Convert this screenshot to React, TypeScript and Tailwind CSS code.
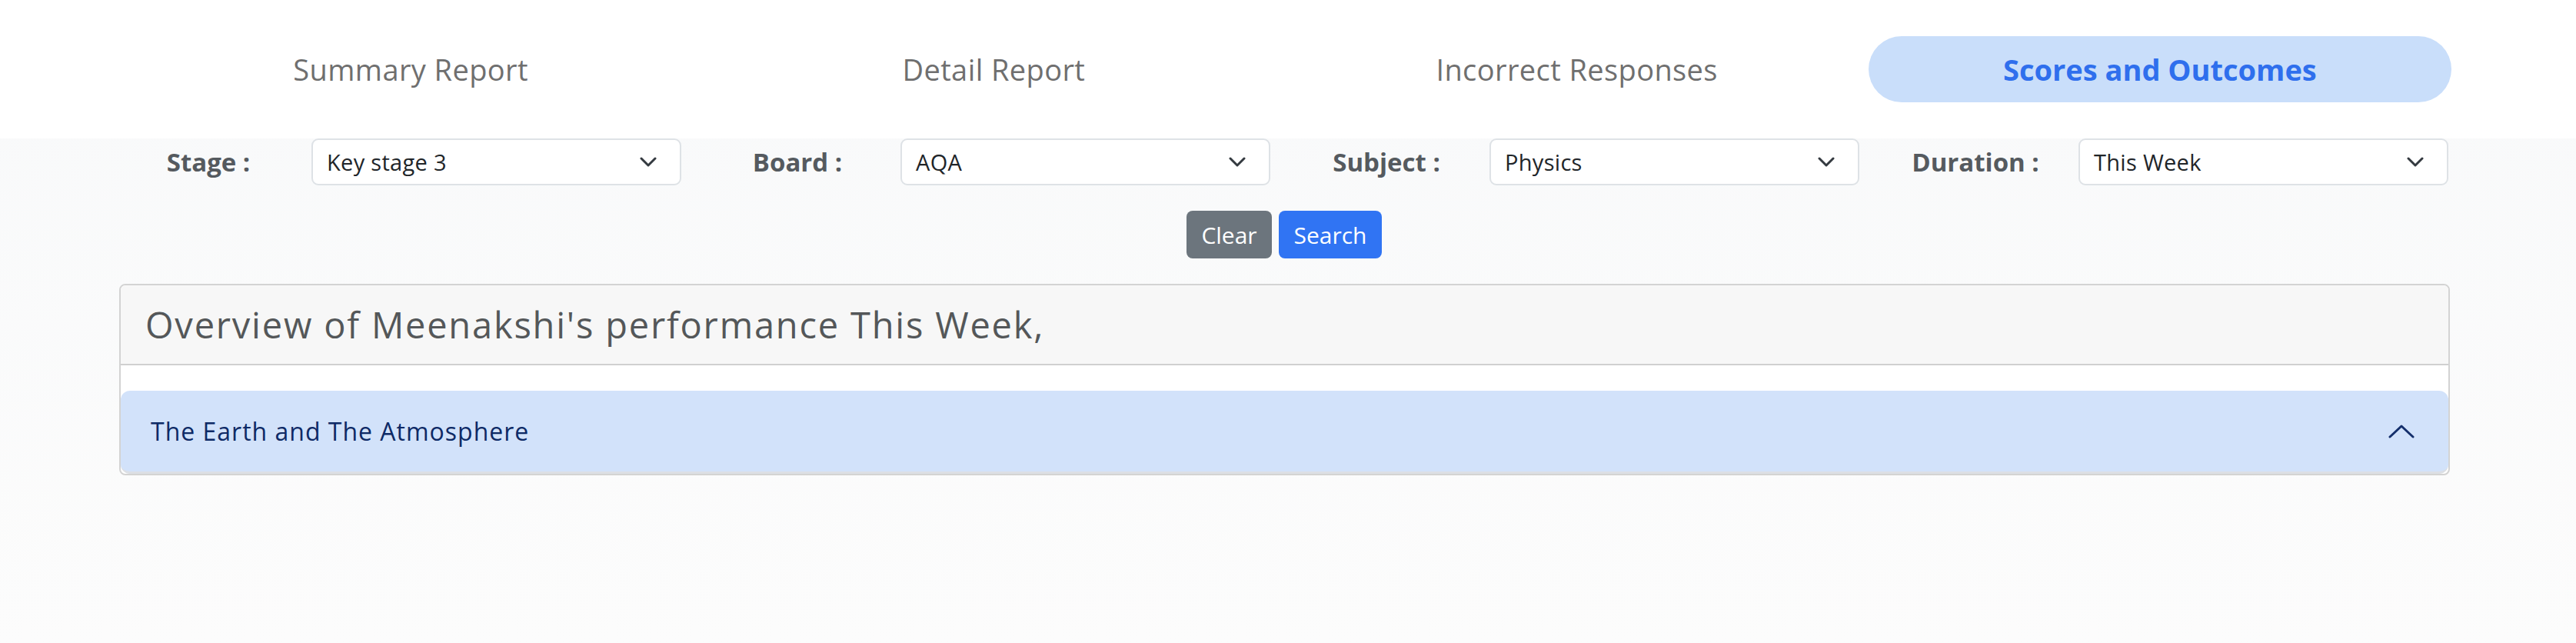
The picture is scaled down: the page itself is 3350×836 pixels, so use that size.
const tabs = ["Summary Report", "Detail Report", "Incorrect Responses", "Scores and Outcomes"]

const filters = [
  { label: "Stage :", value: "Key stage 3" },
  { label: "Board :", value: "AQA" },
  { label: "Subject :", value: "Physics" },
  { label: "Duration :", value: "This Week" },
]

function SelectBox({ value }: { value: string }) {
  return (
    <div className="ml-[6px] flex h-[61px] w-[481px] items-center justify-between rounded-[9px] border-2 border-[#dee2e6] bg-white pl-[18px] pr-[30px]">
      <span className="text-[29px] tracking-[0.3px] text-[#212529]">{value}</span>
      <svg width="22" height="13" viewBox="0 0 22 13" fill="none">
        <path d="M2 2 L11 11 L20 2" stroke="#343a40" strokeWidth="3" strokeLinecap="round" strokeLinejoin="round" />
      </svg>
    </div>
  )
}

export default function App() {
  const active = 3

  return (
    <div
      className="min-h-[836px] w-full bg-gradient-to-b from-[#f8f9fa] to-[#fcfcfc]"
      style={{ fontFamily: '"Open Sans", "Noto Sans", sans-serif' }}
    >
      {/* Tabs */}
      <nav className="flex h-[180px] items-center bg-white">
        <div className="ml-[155px] grid w-[3033px] grid-cols-4">
          {tabs.map((t, i) => (
            <div
              key={t}
              className={
                i === active
                  ? "flex h-[86px] items-center justify-center rounded-full bg-[#c9defa] text-[38px] font-bold text-[#2f6fed]"
                  : "flex h-[86px] items-center justify-center text-[38px] font-medium tracking-[0.4px] text-[#6f6f6f]"
              }
            >
              {t}
            </div>
          ))}
        </div>
      </nav>

      {/* Filters */}
      <div className="ml-[143px] grid w-[3064px] grid-cols-4">
        {filters.map((f) => (
          <div key={f.label} className="flex items-center">
            <label className="w-[256px] text-center text-[33px] font-bold text-[#555a5f]">{f.label}</label>
            <SelectBox value={f.value} />
          </div>
        ))}
      </div>

      <div className="ml-[143px] mt-[33px] flex w-[3064px] justify-center gap-[9px] pr-[10px]">
        <button className="h-[62px] w-[111px] rounded-[8px] bg-[#6c757d] text-[30px] text-white">Clear</button>
        <button className="h-[62px] w-[134px] rounded-[8px] bg-[#3074f3] text-[30px] text-white">Search</button>
      </div>

      {/* Overview card */}
      <div className="ml-[155px] mt-[33px] w-[3031px] overflow-hidden rounded-[8px] border-2 border-[#d3d3d3] bg-white">
        <div className="flex h-[104px] items-center border-b-2 border-[#d0d0d0] bg-[#f7f7f7] pl-[32px] text-[47px] tracking-[1.8px] text-[#545759]">
          Overview of Meenakshi's performance This Week,
        </div>
        <div className="pt-[33px]">
          <div className="flex h-[108px] items-center justify-between rounded-[12px] border-b-[3px] border-[#dcdfe4] bg-[#d2e2fa] pl-[39px] pr-[44px]">
            <span className="text-[32px] tracking-[1px] text-[#0e2a66]">The Earth and The Atmosphere</span>
            <svg width="34" height="18" viewBox="0 0 34 18" fill="none">
              <path d="M2 16 L17 2 L32 16" stroke="#142f6b" strokeWidth="3" strokeLinecap="round" strokeLinejoin="round" />
            </svg>
          </div>
        </div>
      </div>
    </div>
  )
}
